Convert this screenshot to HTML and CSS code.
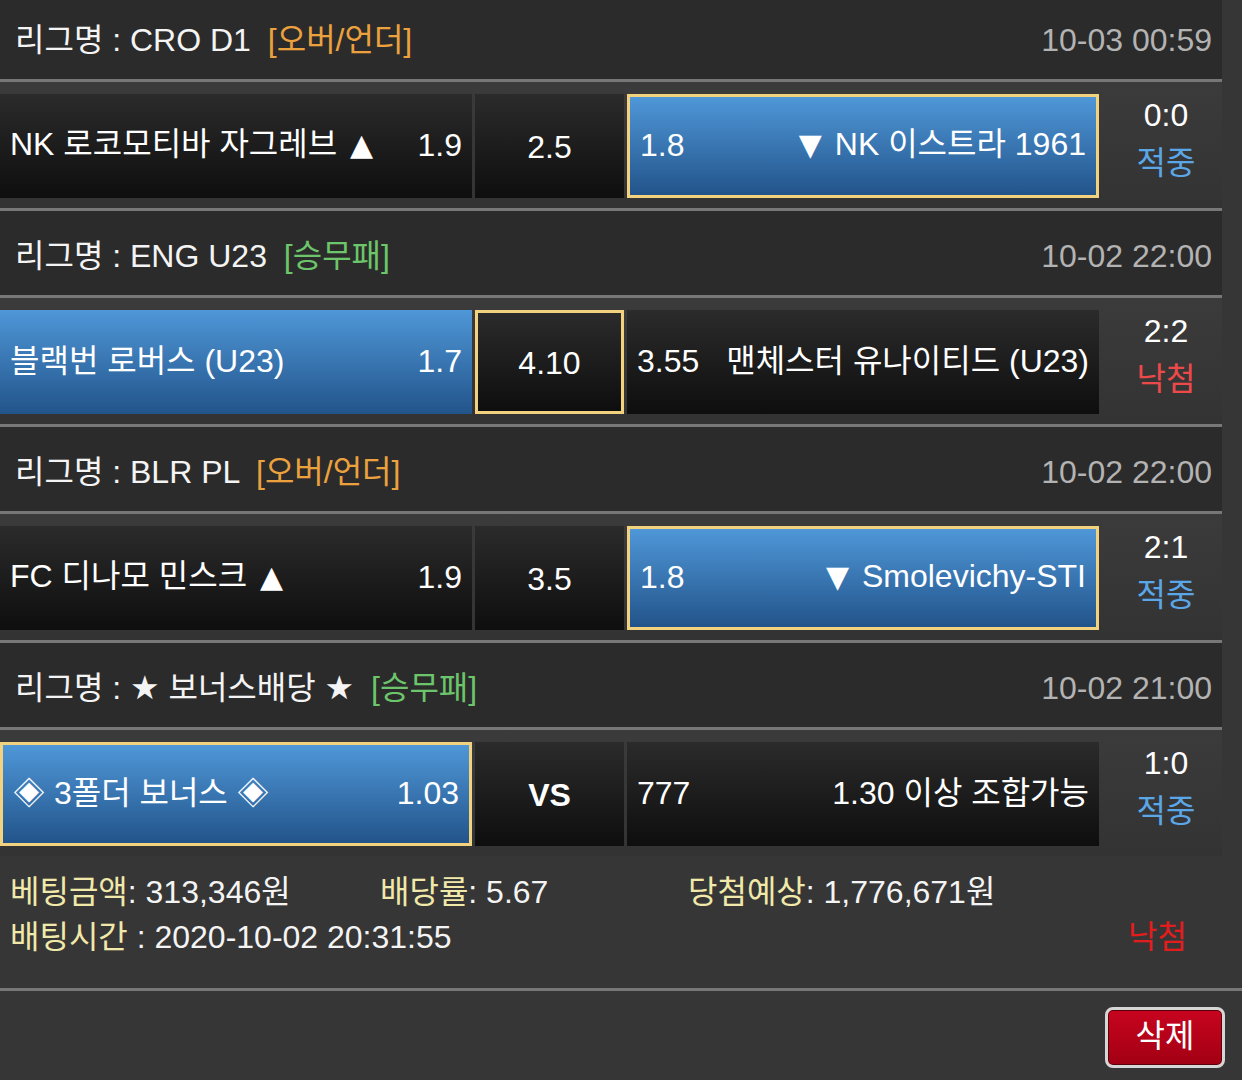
FILE: index.html
```html
<!DOCTYPE html>
<html lang="ko">
<head>
<meta charset="utf-8">
<title>배팅내역</title>
<link rel="stylesheet" href="styles.css">
</head>
<body>
<div class="list">
  <section class="game">
    <div class="league">
      <div class="lname">리그명 : CRO D1 <span class="tag ou">[오버/언더]</span></div>
      <div class="ltime">10-03 00:59</div>
    </div>
    <div class="match">
      <div class="cell"><span class="team">NK 로코모티바 자그레브 <span class="sym up">▲</span></span><span class="odd">1.9</span></div>
      <div class="cell mid">2.5</div>
      <div class="cell blue sel"><span class="odd">1.8</span><span class="team"><span class="sym down">▼</span> NK 이스트라 1961</span></div>
      <div class="score"><div>0:0</div><div class="res hit">적중</div></div>
    </div>
  </section>

  <section class="game">
    <div class="league">
      <div class="lname">리그명 : ENG U23 <span class="tag wdl">[승무패]</span></div>
      <div class="ltime">10-02 22:00</div>
    </div>
    <div class="match">
      <div class="cell blue"><span class="team">블랙번 로버스 (U23)</span><span class="odd">1.7</span></div>
      <div class="cell mid sel">4.10</div>
      <div class="cell"><span class="odd">3.55</span><span class="team">맨체스터 유나이티드 (U23)</span></div>
      <div class="score"><div>2:2</div><div class="res miss">낙첨</div></div>
    </div>
  </section>

  <section class="game">
    <div class="league">
      <div class="lname">리그명 : BLR PL <span class="tag ou">[오버/언더]</span></div>
      <div class="ltime">10-02 22:00</div>
    </div>
    <div class="match">
      <div class="cell"><span class="team">FC 디나모 민스크 <span class="sym up">▲</span></span><span class="odd">1.9</span></div>
      <div class="cell mid">3.5</div>
      <div class="cell blue sel"><span class="odd">1.8</span><span class="team"><span class="sym down">▼</span> Smolevichy-STI</span></div>
      <div class="score"><div>2:1</div><div class="res hit">적중</div></div>
    </div>
  </section>

  <section class="game">
    <div class="league">
      <div class="lname">리그명 : <span class="sym star">★</span> 보너스배당 <span class="sym star">★</span> <span class="tag wdl">[승무패]</span></div>
      <div class="ltime">10-02 21:00</div>
    </div>
    <div class="match">
      <div class="cell blue sel"><span class="team">◈ 3폴더 보너스 ◈</span><span class="odd">1.03</span></div>
      <div class="cell mid vs">VS</div>
      <div class="cell"><span class="odd">777</span><span class="team">1.30 이상 조합가능</span></div>
      <div class="score"><div>1:0</div><div class="res hit">적중</div></div>
    </div>
  </section>
</div>

<div class="summary">
  <div class="sum-row">
    <div><span class="lbl">베팅금액</span>: 313,346원</div>
    <div><span class="lbl">배당률</span>: 5.67</div>
    <div><span class="lbl">당첨예상</span>: 1,776,671원</div>
  </div>
  <div class="sum-row2">
    <div><span class="lbl">배팅시간</span> : 2020-10-02 20:31:55</div>
    <div class="final">낙첨</div>
  </div>
</div>

<div class="actions">
  <button class="del" type="button">삭제</button>
</div>
</body>
</html>
```

FILE: styles.css
```css
* {
  box-sizing: border-box;
  margin: 0;
  padding: 0;
}

html, body {
  background: #363636;
}

body {
  font-family: "Liberation Sans", "Noto Sans CJK KR", sans-serif;
  font-size: 32px;
  line-height: 40px;
  color: #f4f4f4;
  width: 1242px;
  height: 1080px;
  overflow: hidden;
}

.sym {
  font-family: "DejaVu Sans", sans-serif;
  font-size: 30px;
}

.sym.up {
  margin-left: 4px;
}

.sym.down {
  margin-right: 4px;
}

.sym.star {
  font-size: 33px;
}

.list {
  margin-top: -5px;
}

.game {
  width: 1222px;
}

.league {
  height: 87px;
  background: #2b2b2b;
  border-bottom: 3px solid #777777;
  display: flex;
  justify-content: space-between;
  align-items: center;
  padding: 6px 10px 0 15px;
  white-space: nowrap;
}

.tag {
  margin-left: 8px;
}

.tag.ou {
  color: #eba23e;
}

.tag.wdl {
  color: #6cc56a;
}

.ltime {
  color: #b3b3b3;
}

.match {
  display: grid;
  grid-template-columns: 472px 149px 472px 1fr;
  column-gap: 3px;
  height: 129px;
  padding: 12px 0 10px;
  border-bottom: 3px solid #777777;
  background: linear-gradient(#3b3b3b, #333333);
}

.game:last-child .match {
  height: 126px;
  border-bottom: none;
}

.cell {
  display: flex;
  align-items: center;
  justify-content: space-between;
  padding: 0 10px 3px;
  background: linear-gradient(#2b2b2b, #0e0e0e);
  white-space: nowrap;
  color: #ffffff;
}

.cell.blue {
  background: linear-gradient(#4f97d8, #22548a);
}

.cell.sel {
  border: 3px solid #f2d27e;
}

.cell.mid {
  justify-content: center;
  padding: 2px 0 0;
}

.cell.vs {
  font-weight: bold;
}

.score {
  display: flex;
  flex-direction: column;
  align-items: center;
  line-height: 46px;
  margin-top: -2px;
  padding-left: 8px;
  color: #ffffff;
}

.res {
  margin-top: 2px;
}

.res.hit {
  color: #5aa6e6;
}

.res.miss {
  color: #ec4a4a;
}

.summary {
  padding: 14px 0 28px 10px;
  border-bottom: 3px solid #777777;
  line-height: 45px;
  white-space: nowrap;
}

.sum-row {
  display: grid;
  grid-template-columns: 370px 308px 1fr;
}

.sum-row2 {
  display: flex;
  justify-content: space-between;
  padding-right: 55px;
}

.lbl {
  color: #f1e9a9;
}

.final {
  color: #e31d1d;
}

.actions {
  display: flex;
  justify-content: flex-end;
  padding: 16px 17px 0 0;
}

.del {
  width: 120px;
  height: 61px;
  padding-bottom: 4px;
  border: 3px solid #d6d6d6;
  border-radius: 8px;
  background: linear-gradient(#c8041f, #a20014);
  color: #ffffff;
  font-family: inherit;
  font-size: 32px;
  line-height: 40px;
  display: flex;
  align-items: center;
  justify-content: center;
  box-shadow: inset 0 0 0 1px #5a0008;
}
```
